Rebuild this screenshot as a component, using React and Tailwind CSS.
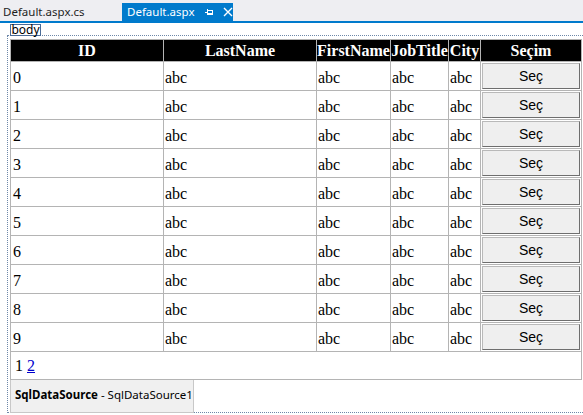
import React from "react";

const rows = [0, 1, 2, 3, 4, 5, 6, 7, 8, 9];

function Pin() {
  return (
    <svg width="10" height="10" viewBox="0 0 10 10" className="block">
      <path d="M0.5 5h3M3.5 2v6M3.5 3h5v4h-5M3.5 6h5" stroke="#fff" strokeWidth="1" fill="none" shapeRendering="crispEdges" />
    </svg>
  );
}

function Close() {
  return (
    <svg width="10" height="10" viewBox="0 0 10 10" className="block">
      <path d="M1 1L9 9M9 1L1 9" stroke="#fff" strokeWidth="1.4" fill="none" />
    </svg>
  );
}

export default function App() {
  return (
    <div className="w-[583px] h-[415px] overflow-hidden bg-white relative" style={{ fontFamily: '"Noto Sans", sans-serif' }}>
      {/* tab bar */}
      <div className="h-[21px] bg-[#eeeef2] flex items-end text-[11.5px]">
        <div className="h-[18px] pl-[3px] w-[122px] flex items-center text-[#1e1e1e] whitespace-nowrap">Default.aspx.cs</div>
        <div className="h-[18px] w-[111px] bg-[#007acc] text-white flex items-center pl-[5px] whitespace-nowrap">
          <span>Default.aspx</span>
          <span className="ml-[10px]"><Pin /></span>
          <span className="ml-[9px]"><Close /></span>
        </div>
      </div>
      <div className="h-[2px] bg-[#007acc]" />
      {/* designer */}
      <div className="h-[12px] pl-[10px] pt-[1px]">
        <div className="relative z-10 w-[31px] h-[12px] border border-[#4a6c98] flex items-center justify-center text-[12px] leading-none text-black bg-white">body</div>
      </div>
      <div className="ml-[7px] w-[600px] h-[378px] border-t border-l border-b border-dotted border-[#6d87a8] pl-[2px] pt-[3px]">
        <table className="border-collapse table-fixed w-[571px]" style={{ fontFamily: '"Liberation Serif", serif' }}>
          <colgroup>
            <col className="w-[153px]" />
            <col className="w-[153px]" />
            <col className="w-[74px]" />
            <col className="w-[58px]" />
            <col className="w-[32px]" />
            <col className="w-[101px]" />
          </colgroup>
          <thead>
            <tr className="h-[22px] bg-black text-white font-bold text-[16px]">
              {["ID", "LastName", "FirstName", "JobTitle", "City", "Seçim"].map((h) => (
                <th key={h} className="border border-[#b4b4b4] p-0 text-center leading-[18px] whitespace-nowrap overflow-hidden">{h}</th>
              ))}
            </tr>
          </thead>
          <tbody className="text-[16px] text-black">
            {rows.map((r) => (
              <tr key={r} className="h-[29px]">
                <td className="border border-[#b4b4b4] pl-[2px] pt-[3px] pb-0">{r}</td>
                <td className="border border-[#b4b4b4] pl-[1px] pt-[3px] pb-0">abc</td>
                <td className="border border-[#b4b4b4] pl-[1px] pt-[3px] pb-0">abc</td>
                <td className="border border-[#b4b4b4] pl-[1px] pt-[3px] pb-0">abc</td>
                <td className="border border-[#b4b4b4] pl-[1px] pt-[3px] pb-0">abc</td>
                <td className="border border-[#b4b4b4] p-0 pl-[1px]">
                  <div
                    className="h-[26px] w-[98px] bg-[#efefef] border border-[#b9b9b9] border-b-[#6e6e6e] border-r-[#6e6e6e] flex items-center justify-center text-[14px]"
                    style={{ fontFamily: '"Liberation Sans", sans-serif' }}
                  >
                    Seç
                  </div>
                </td>
              </tr>
            ))}
            <tr className="h-[28px]">
              <td colSpan={6} className="border border-[#b4b4b4] pl-[4px] py-0">
                1 <span className="text-[#0000cc] underline">2</span>
              </td>
            </tr>
          </tbody>
        </table>
        <div className="w-[184px] h-[33px] bg-[#f0f0f0] border border-[#c8c8c8] border-t-0 flex items-center pl-[4px] pb-[2px] text-[11.5px] text-black whitespace-nowrap">
          <span className="font-bold">SqlDataSource</span>
          <span>&nbsp;- SqlDataSource1</span>
        </div>
      </div>
    </div>
  );
}
